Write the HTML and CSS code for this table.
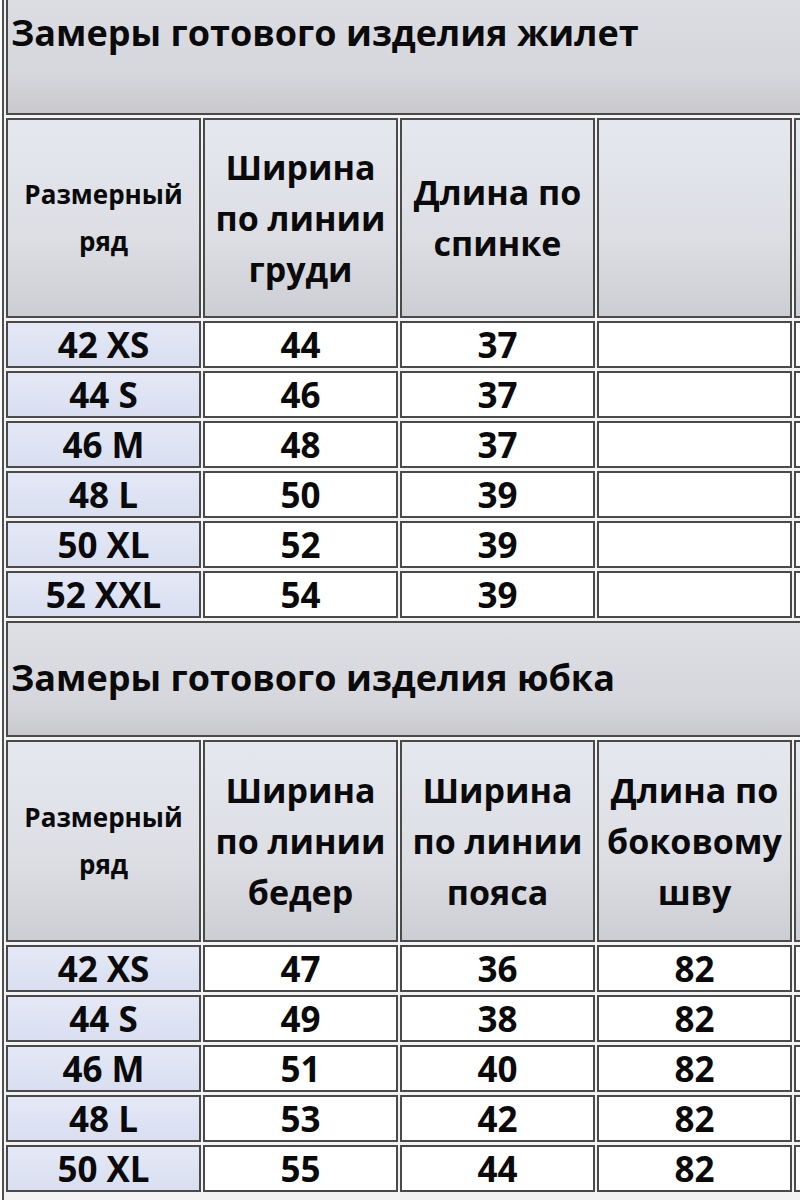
FILE: index.html
```html
<!DOCTYPE html>
<html lang="ru">
<head>
<meta charset="utf-8">
<title>Замеры готового изделия</title>
<link rel="stylesheet" href="styles.css">
</head>
<body>
<div class="sheet">
  <div class="title">Замеры готового изделия жилет</div>

  <div class="cell head"><span class="small">Размерный<br>ряд</span></div>
  <div class="cell head">Ширина<br>по линии<br>груди</div>
  <div class="cell head">Длина по<br>спинке</div>
  <div class="cell head"></div>
  <div class="cell head"></div>

  <div class="cell size">42 XS</div><div class="cell">44</div><div class="cell">37</div><div class="cell"></div><div class="cell"></div>
  <div class="cell size">44 S</div><div class="cell">46</div><div class="cell">37</div><div class="cell"></div><div class="cell"></div>
  <div class="cell size">46 M</div><div class="cell">48</div><div class="cell">37</div><div class="cell"></div><div class="cell"></div>
  <div class="cell size">48 L</div><div class="cell">50</div><div class="cell">39</div><div class="cell"></div><div class="cell"></div>
  <div class="cell size">50 XL</div><div class="cell">52</div><div class="cell">39</div><div class="cell"></div><div class="cell"></div>
  <div class="cell size">52 XXL</div><div class="cell">54</div><div class="cell">39</div><div class="cell"></div><div class="cell"></div>

  <div class="title">Замеры готового изделия юбка</div>

  <div class="cell head"><span class="small">Размерный<br>ряд</span></div>
  <div class="cell head">Ширина<br>по линии<br>бедер</div>
  <div class="cell head">Ширина<br>по линии<br>пояса</div>
  <div class="cell head">Длина по<br>боковому<br>шву</div>
  <div class="cell head"></div>

  <div class="cell size">42 XS</div><div class="cell">47</div><div class="cell">36</div><div class="cell">82</div><div class="cell"></div>
  <div class="cell size">44 S</div><div class="cell">49</div><div class="cell">38</div><div class="cell">82</div><div class="cell"></div>
  <div class="cell size">46 M</div><div class="cell">51</div><div class="cell">40</div><div class="cell">82</div><div class="cell"></div>
  <div class="cell size">48 L</div><div class="cell">53</div><div class="cell">42</div><div class="cell">82</div><div class="cell"></div>
  <div class="cell size">50 XL</div><div class="cell">55</div><div class="cell">44</div><div class="cell">82</div><div class="cell"></div>
</div>
</body>
</html>
```

FILE: styles.css
```css
html, body {
  margin: 0;
  padding: 0;
  overflow: hidden;
  background: #ffffff;
}

body {
  width: 800px;
  height: 1200px;
  font-family: "Open Sans", "Noto Sans", "DejaVu Sans", sans-serif;
  font-weight: 700;
  color: #0a0a0a;
}

.sheet {
  display: grid;
  grid-template-columns: repeat(5, 195px);
  grid-template-rows: 140px 200px repeat(6, 47px) 116px 202px repeat(6, 47px);
  column-gap: 2px;
  row-gap: 3px;
  padding: 3px 2px;
  border: 2px solid #4f4f4f;
  margin: -30px 0 0 2px;
  width: max-content;
  background: #f3f3f3;
}

.cell {
  box-sizing: border-box;
  border: 2px solid #4a4a4a;
  background: #ffffff;
  display: flex;
  align-items: center;
  justify-content: center;
  text-align: center;
  font-size: 35px;
  line-height: 46px;
}

.size {
  background: linear-gradient(#e4e8f6, #d9dff0);
}

.head {
  font-size: 34px;
  line-height: 51px;
  background: linear-gradient(#e6e8ef 0%, #dcdee4 60%, #cdced3 100%);
}

.small {
  font-size: 26px;
  line-height: 47px;
}

.title {
  grid-column: 1 / -1;
  box-sizing: border-box;
  border: 2px solid #4a4a4a;
  border-right: none;
  background: linear-gradient(#dedfe4 0%, #d6d7dc 70%, #c9c9cd 100%);
  font-size: 36px;
  line-height: 40px;
  padding: 35px 0 0 3px;
  white-space: nowrap;
}

.title:first-child {
  padding-top: 36px;
}
```
